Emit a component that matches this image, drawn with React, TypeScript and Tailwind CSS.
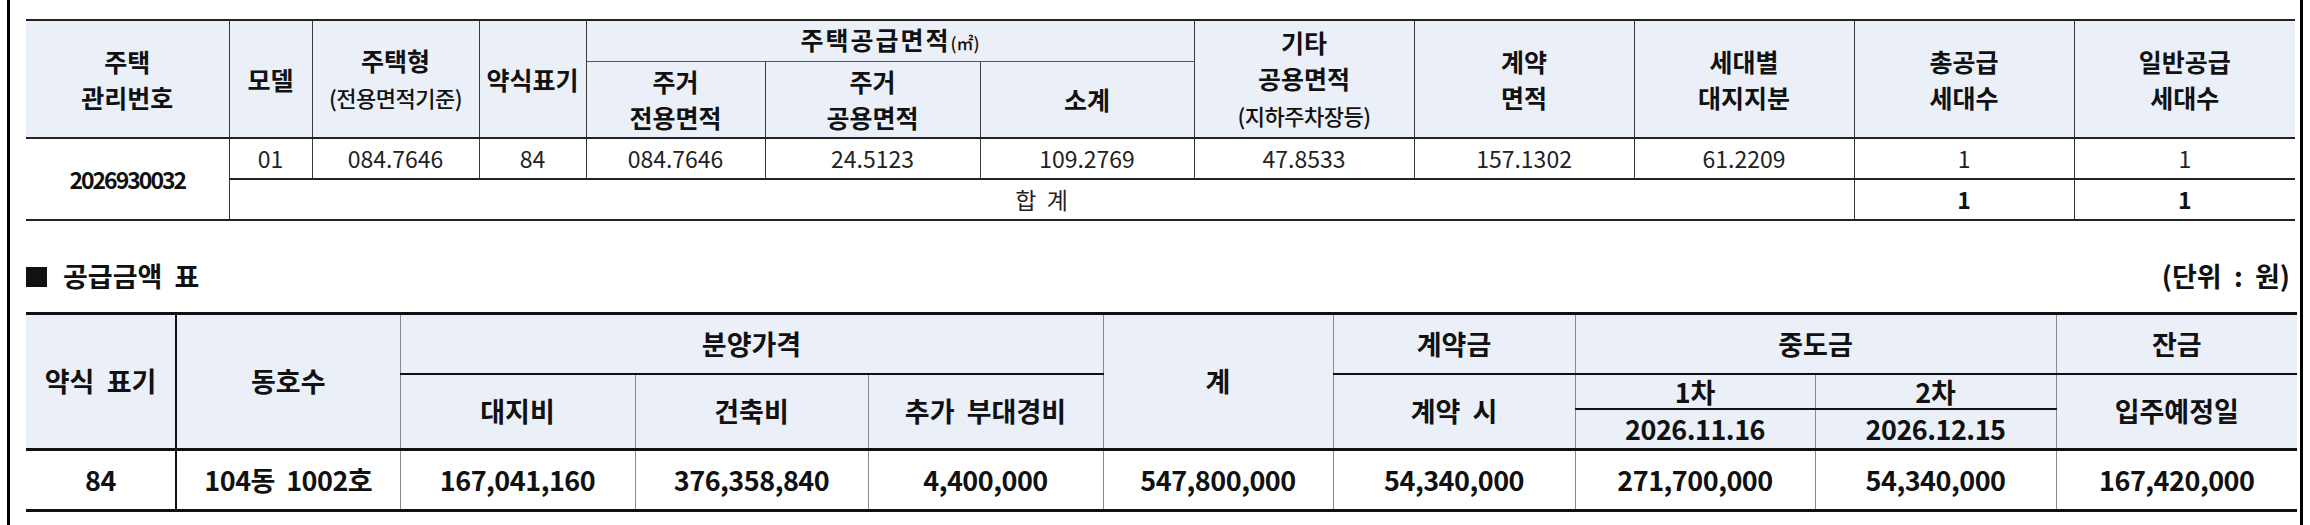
import React from "react";

const FONT = "font-['Noto_Sans_CJK_KR','Noto_Sans',sans-serif]";

const th1 =
  "bg-[#eaeff8] text-[#111] font-bold text-[25px] leading-[36px] text-center align-middle p-0 border-x border-[#3a3a3a]";
const td1 =
  "text-[23px] leading-[30px] text-center align-middle p-0 border-x border-[#3a3a3a]";

const th2 =
  "bg-[#eaeff8] text-[#111] font-bold text-[27px] leading-[32px] text-center align-middle p-0 border-x border-[#8a8a8a]";
const td2 =
  "text-[#111] font-bold text-[27px] leading-[32px] text-center align-middle p-0 border-x border-[#8a8a8a] tracking-[-0.5px]";

function Table1() {
  const widths = [203, 83, 167, 107, 179, 215, 214, 220, 220, 220, 220, 221];
  const vals = ["01", "084.7646", "84", "084.7646", "24.5123", "109.2769", "47.8533", "157.1302", "61.2209", "1", "1"];
  return (
    <table className="table-fixed border-collapse w-[2269px]">
      <colgroup>
        {widths.map((w, i) => (
          <col key={i} style={{ width: w }} />
        ))}
      </colgroup>
      <thead>
        <tr className="h-[41px]">
          <th rowSpan={2} className={`${th1} border-l-0 border-t-2 border-t-[#222]`}>
            주택
            <br />
            관리번호
          </th>
          <th rowSpan={2} className={`${th1} border-t-2 border-t-[#222]`}>
            모델
          </th>
          <th rowSpan={2} className={`${th1} border-t-2 border-t-[#222]`}>
            주택형
            <br />
            <span className="text-[22px] font-medium tracking-[-0.5px]">(전용면적기준)</span>
          </th>
          <th rowSpan={2} className={`${th1} border-t-2 border-t-[#222]`}>
            약식표기
          </th>
          <th colSpan={3} className={`${th1} border-t-2 border-t-[#222] border-b border-b-[#555]`}>
            <span className="tracking-[2px]">주택공급면적</span>
            <span className="text-[17px] font-medium">(㎡)</span>
          </th>
          <th rowSpan={2} className={`${th1} border-t-2 border-t-[#222]`}>
            기타
            <br />
            공용면적
            <br />
            <span className="text-[22px] font-medium tracking-[-0.5px]">(지하주차장등)</span>
          </th>
          <th rowSpan={2} className={`${th1} border-t-2 border-t-[#222]`}>
            계약
            <br />
            면적
          </th>
          <th rowSpan={2} className={`${th1} border-t-2 border-t-[#222]`}>
            세대별
            <br />
            대지지분
          </th>
          <th rowSpan={2} className={`${th1} border-t-2 border-t-[#222]`}>
            총공급
            <br />
            세대수
          </th>
          <th rowSpan={2} className={`${th1} border-r-0 border-t-2 border-t-[#222]`}>
            일반공급
            <br />
            세대수
          </th>
        </tr>
        <tr className="h-[76px]">
          <th className={th1}>
            주거
            <br />
            전용면적
          </th>
          <th className={th1}>
            주거
            <br />
            공용면적
          </th>
          <th className={th1}>소계</th>
        </tr>
      </thead>
      <tbody>
        <tr className="h-[41px]">
          <td
            rowSpan={2}
            className={`${td1} border-l-0 border-t-2 border-t-[#222] border-b-2 border-b-[#222] font-bold text-[#111] tracking-[-2px]`}
          >
            2026930032
          </td>
          {vals.map((v, i) => (
            <td
              key={i}
              className={`${td1} font-normal text-[#222] border-t-2 border-t-[#222] border-b-2 border-b-[#222] ${
                i === vals.length - 1 ? "border-r-0" : ""
              }`}
            >
              {v}
            </td>
          ))}
        </tr>
        <tr className="h-[41px]">
          <td colSpan={9} className={`${td1} font-normal text-[#222] border-b-2 border-b-[#222] whitespace-pre`}>
            {"합  계"}
          </td>
          <td className={`${td1} border-b-2 border-b-[#222] font-bold text-[#111]`}>1</td>
          <td className={`${td1} border-r-0 border-b-2 border-b-[#222] font-bold text-[#111]`}>1</td>
        </tr>
      </tbody>
    </table>
  );
}

function Table2() {
  const widths = [150, 224, 235, 233, 235, 230, 242, 240, 241, 241];
  const top = "border-t-[3px] border-t-[#111]";
  const line = "border-b-2 border-b-[#111]";
  const values = [
    "84",
    "104동  1002호",
    "167,041,160",
    "376,358,840",
    "4,400,000",
    "547,800,000",
    "54,340,000",
    "271,700,000",
    "54,340,000",
    "167,420,000",
  ];
  return (
    <table className="table-fixed border-collapse w-[2271px]">
      <colgroup>
        {widths.map((w, i) => (
          <col key={i} style={{ width: w }} />
        ))}
      </colgroup>
      <thead>
        <tr className="h-[61px]">
          <th rowSpan={3} className={`${th2} ${top} border-l-0 border-r-2 border-r-[#111] whitespace-pre`}>
            {"약식  표기"}
          </th>
          <th rowSpan={3} className={`${th2} ${top} border-l-2 border-l-[#111]`}>
            동호수
          </th>
          <th colSpan={3} className={`${th2} ${top} ${line}`}>
            분양가격
          </th>
          <th rowSpan={3} className={`${th2} ${top}`}>
            계
          </th>
          <th className={`${th2} ${top} ${line}`}>계약금</th>
          <th colSpan={2} className={`${th2} ${top} ${line}`}>
            중도금
          </th>
          <th className={`${th2} ${top} ${line} border-r-0`}>잔금</th>
        </tr>
        <tr className="h-[35px]">
          <th rowSpan={2} className={th2}>
            대지비
          </th>
          <th rowSpan={2} className={th2}>
            건축비
          </th>
          <th rowSpan={2} className={`${th2} whitespace-pre`}>
            {"추가  부대경비"}
          </th>
          <th rowSpan={2} className={`${th2} whitespace-pre`}>
            {"계약  시"}
          </th>
          <th className={`${th2} ${line} leading-[30px]`}>1차</th>
          <th className={`${th2} ${line} leading-[30px]`}>2차</th>
          <th rowSpan={2} className={`${th2} border-r-0`}>
            입주예정일
          </th>
        </tr>
        <tr className="h-[40px]">
          <th className={`${th2} tracking-[-0.5px]`}>2026.11.16</th>
          <th className={`${th2} tracking-[-0.5px]`}>2026.12.15</th>
        </tr>
      </thead>
      <tbody>
        <tr className="h-[61px]">
          {values.map((v, i) => (
            <td
              key={i}
              className={`${td2} border-t-[3px] border-t-[#111] border-b-[3px] border-b-[#111] whitespace-pre ${
                i === 0 ? "border-l-0 border-r-2 border-r-[#111]" : ""
              } ${i === 1 ? "border-l-2 border-l-[#111]" : ""} ${i === values.length - 1 ? "border-r-0" : ""}`}
            >
              {v}
            </td>
          ))}
        </tr>
      </tbody>
    </table>
  );
}

export default function App() {
  return (
    <div className={`w-[2310px] h-[525px] bg-white px-[7px] ${FONT}`}>
      <div className="h-full border-x-[3px] border-black pl-[16px] pr-[2px] pt-[19px]">
        <Table1 />
        <div className="mt-[36px] h-[40px] flex items-center justify-between pr-[7px] w-[2271px]">
          <div className="flex items-center">
            <div className="w-[21px] h-[20px] bg-[#111]" />
            <span className="ml-[16px] text-[27px] font-bold text-[#111] whitespace-pre">{"공급금액  표"}</span>
          </div>
          <span className="text-[27px] font-bold text-[#111] whitespace-pre">{"(단위  :  원)"}</span>
        </div>
        <div className="mt-[15px]">
          <Table2 />
        </div>
      </div>
    </div>
  );
}
